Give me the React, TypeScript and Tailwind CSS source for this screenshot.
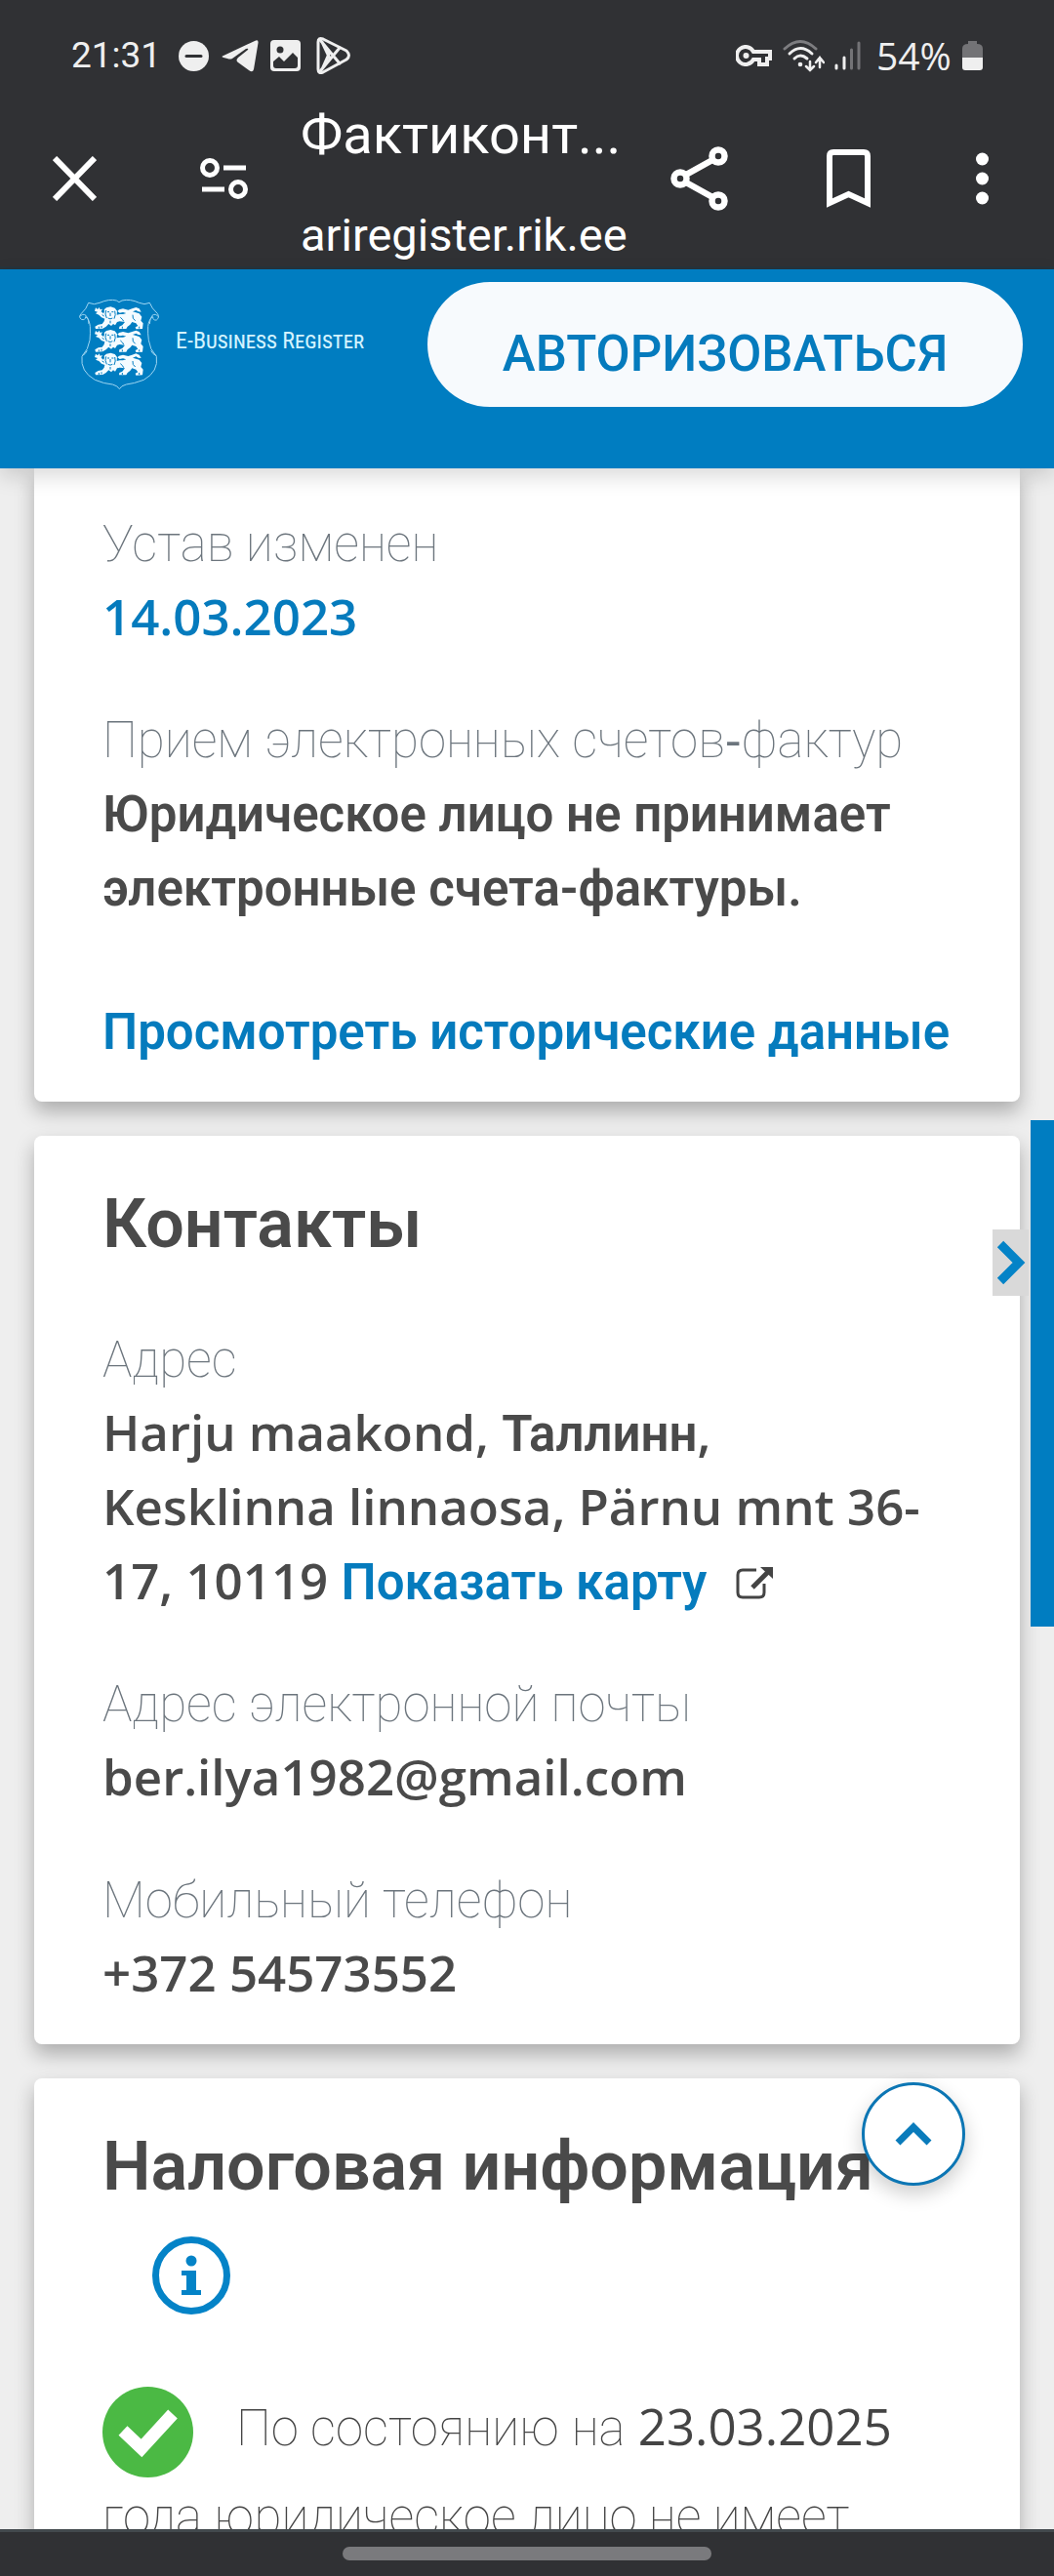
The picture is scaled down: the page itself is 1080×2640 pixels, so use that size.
import React from 'react';

const LION =
  'M66 40 L72 45 L77 39 L80 46 L87 44 L83 52 L90 58 L93 52 L92 46 L99 40 L112 37 L125 41 L132 50 L131 62 L140 60 L150 60 L160 57 L150 54 L140 56 L133 51 L138 46 L150 43 L166 47 L178 43 L190 39 L200 43 L206 53 L197 52 L190 48 L180 52 L200 58 L208 68 L205 80 L212 88 L210 105 L190 106 L188 100 L196 96 L190 88 L178 84 L172 92 L164 98 L160 105 L138 105 L139 98 L148 94 L156 84 L140 82 L132 84 L126 94 L120 90 L114 96 L106 90 L98 98 L88 104 L66 105 L64 98 L74 92 L86 90 L92 82 L94 74 L84 70 L76 62 L66 58 L72 53 L63 50 Z';

function Crest() {
  return (
    <svg viewBox="0 0 276 300" className="h-[100px] w-[92px] shrink-0" aria-hidden="true">
      <path
        d="M44 25 Q62 33 78 25 Q108 12 130 18 L138 23 L147 18 Q172 12 200 25 Q216 33 232 25 Q238 42 256 58 Q264 70 253 78 Q242 80 242 68 Q229 76 227 98 Q226 120 229 140 Q232 168 253 190 Q260 236 214 262 Q182 274 160 276 Q144 280 139 290 Q134 280 118 276 Q92 274 64 262 Q18 236 24 190 Q44 168 48 140 Q50 120 49 98 Q47 76 35 68 Q34 80 22 76 Q12 68 22 58 Q38 44 44 25 Z"
        fill="none"
        stroke="#9fd6f2"
        strokeWidth="3"
      />
      <path d="M17 68 Q26 56 36 64 Q46 74 45 90 M259 68 Q250 56 240 64 Q232 74 232 90 M24 188 Q34 184 40 172 M253 188 Q242 184 236 172" fill="none" stroke="#9fd6f2" strokeWidth="3" />
      {[0, 71, 142].map((dy) => (
        <g key={dy} transform={`translate(0 ${dy})`}>
          <path d={LION} fill="#f4fbff" />
          <path d="M102 53 h6 M115 53 h6 M111 56 v10 M104 72 q7 5 14 0 M98 48 q-5 12 2 24 M125 50 q4 12 -2 24 M111 80 v8 M92 66 l-6 -4 M142 70 q8 6 10 12 M180 62 q-2 12 8 18 M76 98 v6 M84 96 v6 M148 98 v6 M200 98 v6" fill="none" stroke="#007dc1" strokeWidth="3" />
        </g>
      ))}
    </svg>
  );
}

function StatusBar() {
  return (
    <div className="flex h-[92px] items-center pt-[22px] pr-[73px] pl-[73px] text-[#efefef]">
      <span className="mr-[20px] w-[90px] font-['Roboto'] text-[37px] leading-[50px]">21:31</span>
      {/* Do not disturb */}
      <svg viewBox="0 0 31 31" className="mr-[13px] h-[31px] w-[31px]">
        <circle cx="15.500" cy="15.500" r="15.500" fill="#efefef" />
        <path d="M8 15.500 H23" stroke="#303134" strokeWidth="3" strokeLinecap="round" />
      </svg>
      {/* Telegram */}
      <svg viewBox="0 0 38 34" className="mr-[12px] h-[34px] w-[38px]" fill="#efefef">
        <path d="M2 17 L34 2 Q38 0 37.500 4 L33 31 Q32 35 28 32 L17 24 Q14 22 17 19 L27 11 Q28 9 25 10 L11 20 Q9 21 6 20 L2 19 Q-1 18 2 17 Z" />
      </svg>
      {/* Gallery */}
      <svg viewBox="0 0 31 32" className="mr-[16px] h-[32px] w-[31px]">
        <rect width="31" height="32" rx="4" fill="#efefef" />
        <circle cx="10" cy="10" r="3.500" fill="#303134" />
        <path d="M3 22 L9 17 L14 22 L23 13 L28 18 V26 Q28 29 25 29 H6 Q3 29 3 26 Z" fill="#303134" />
      </svg>
      {/* Play */}
      <svg viewBox="0 0 36 40" className="h-[40px] w-[36px]" fill="none" stroke="#efefef" strokeWidth="3" strokeLinejoin="round" strokeLinecap="round">
        <path d="M2 6 Q2 1 7 3 L31 15 Q36 20 31 24 L7 37 Q2 39 2 34 Z" />
        <path d="M4 4 L24 28 M4 36 L24 12 M14 16 L6 34 M14 23 L6 6" />
      </svg>
      <div className="flex-1" />
      {/* VPN key */}
      <svg viewBox="0 0 37 22" className="mr-[11px] h-[22px] w-[37px]" fill="none" stroke="#efefef" strokeWidth="4">
        <path d="M18 7 A9 9 0 1 0 18 15 H24 V20 H32 V14 H35 V7 Z" strokeLinejoin="miter" />
        <circle cx="10.500" cy="11" r="3" fill="#efefef" stroke="none" />
      </svg>
      {/* Wi-Fi */}
      <svg viewBox="0 0 43 35" className="mr-[10px] h-[35px] w-[43px]" fill="none" stroke="#efefef" strokeWidth="3" strokeLinecap="round">
        <path d="M2 10 Q18 -5 34 10" stroke="#7d7d80" />
        <path d="M7 15 Q18 4 30 15 M12 20 Q18 14 25 20" />
        <circle cx="18" cy="26" r="2.300" fill="#efefef" stroke="none" />
        <path d="M28 23 V32 M24 28 L28 32 L32 28 M38 29 V19 M34 24 L38 19 L42 24" strokeWidth="2.500" />
      </svg>
      {/* Signal */}
      <svg viewBox="0 0 27 30" className="mr-[16px] h-[30px] w-[27px]" strokeWidth="3" strokeLinecap="round">
        <path d="M2 25 V28 M10 17 V28" stroke="#efefef" />
        <path d="M17.500 9 V28 M25 2 V28" stroke="#737376" />
      </svg>
      <span className="w-[88px] font-['Open_Sans'] text-[39px] leading-[50px]">54%</span>
      <svg viewBox="0 0 21 30" className="h-[30px] w-[21px]">
        <path d="M6 0 H15 V3 Q21 3 21 8 V17 H0 V8 Q0 3 6 3 Z" fill="#737376" />
        <path d="M0 17 H21 V27 Q21 30 18 30 H3 Q0 30 0 27 Z" fill="#efefef" />
      </svg>
    </div>
  );
}

function BrowserBar() {
  return (
    <div className="flex h-[184px] items-center border-b-[3px] border-[#26343c] pr-[67px] pl-[54px] text-white">
      <button aria-label="Закрыть" className="mr-[106px]">
        <svg viewBox="0 0 45 46" className="block h-[46px] w-[45px]" stroke="currentColor" strokeWidth="6">
          <path d="M2 2 L43 44 M43 2 L2 44" />
        </svg>
      </button>
      <button aria-label="Сведения о сайте" className="mr-[54px]">
        <svg viewBox="0 0 49 42" className="block h-[42px] w-[49px]" fill="none" stroke="currentColor" strokeWidth="5">
          <circle cx="10" cy="10" r="7.500" />
          <circle cx="39" cy="32" r="7.500" />
          <path d="M24 10 H47 M2 32 H25" />
        </svg>
      </button>
      <div className="min-w-0 flex-1 self-start font-['Roboto'] whitespace-nowrap">
        <div className="text-[56px] leading-[92px]">Фактиконт...</div>
        <div className="pt-[22px] text-[47px] leading-[70px]">ariregister.rik.ee</div>
      </div>
      <button aria-label="Поделиться" className="mr-[101px] ml-[48px]">
        <svg viewBox="0 0 59 66" className="block h-[66px] w-[59px]" fill="none" stroke="currentColor" strokeWidth="6.500">
          <circle cx="49" cy="10" r="6.500" />
          <circle cx="10" cy="33" r="6.500" />
          <circle cx="49" cy="56" r="6.500" />
          <path d="M16 29 L43 14 M16 37 L43 52" />
        </svg>
      </button>
      <button aria-label="Закладка" className="mr-[108px]">
        <svg viewBox="0 0 45 60" className="block h-[60px] w-[45px]" fill="none" stroke="currentColor" strokeWidth="6">
          <path d="M3 55 V7 Q3 3 7 3 H38 Q42 3 42 7 V55 L22.500 46 Z" />
        </svg>
      </button>
      <button aria-label="Меню">
        <svg viewBox="0 0 13 54" className="block h-[54px] w-[13px]" fill="currentColor">
          <circle cx="6.500" cy="7" r="6.500" />
          <circle cx="6.500" cy="27" r="6.500" />
          <circle cx="6.500" cy="47" r="6.500" />
        </svg>
      </button>
    </div>
  );
}

function SiteHeader() {
  return (
    <header className="relative z-10 flex h-[204px] items-start bg-[#007dc1] pr-[32px] pl-[76px] shadow-[0_8px_20px_rgba(0,0,0,0.15)]">
      <a href="#" className="mt-[26px] flex items-center">
        <Crest />
        <span className="mb-[6px] ml-[12px] whitespace-nowrap font-['Roboto_Condensed','Liberation_Sans_Narrow','Roboto'] text-[24px] [font-variant:small-caps] text-[#d3f3ff]">
          E-Business Register
        </span>
      </a>
      <button className="mt-[13px] ml-auto h-[128px] w-[610px] rounded-full bg-[#f7fafd] pt-[20px] font-['Roboto'] text-[51px] font-medium text-[#057bbd]">
        АВТОРИЗОВАТЬСЯ
      </button>
    </header>
  );
}

// Open Sans covers the Latin glyphs, Roboto the Cyrillic ones
function Ru({ children }: { children: React.ReactNode }) {
  return <span className="font-['Roboto'] leading-none">{children}</span>;
}

function Label({ children }: { children: React.ReactNode }) {
  return <dt className="font-thin text-[#6c757d]"><Ru>{children}</Ru></dt>;
}

function Field({ label, children }: { label: React.ReactNode; children: React.ReactNode }) {
  return (
    <div>
      <Label>{label}</Label>
      <dd className="font-semibold text-[#4a4a4a]">{children}</dd>
    </div>
  );
}

function Card({ children, className }: { children: React.ReactNode; className: string }) {
  return (
    <section className={`rounded-[8px] bg-white px-[70px] pb-[36px] shadow-[0_10px_20px_rgba(0,0,0,0.28)] ${className}`}>
      {children}
    </section>
  );
}

export default function App() {
  return (
    <div className="flex h-screen flex-col overflow-hidden bg-[#eeeeee]">
      <div className="shrink-0 bg-[#303134]">
        <StatusBar />
        <BrowserBar />
      </div>

      <div className="shrink-0">
        <SiteHeader />
      </div>

      <main className="relative min-h-0 flex-1 overflow-hidden px-[35px] font-['Open_Sans'] text-[51px] leading-[76px]">
        <Card className="rounded-t-none pt-[37px]">
          <dl className="flex flex-col gap-[49px]">
            <Field label="Устав изменен">
              <a href="#" className="text-[#057bbd]">14.03.2023</a>
            </Field>
            <Field label={<>Прием электронных счетов<span className="font-['Open_Sans'] font-normal">-</span>фактур</>}>
              <Ru>Юридическое лицо не принимает электронные счета-фактуры.</Ru>
            </Field>
          </dl>
          <a href="#" className="mt-[71px] block font-semibold whitespace-nowrap text-[#057bbd]">
            <Ru>Просмотреть исторические данные</Ru>
          </a>
        </Card>

        <Card className="mt-[35px] pt-[48px]">
          <h2 className="mb-[57px] font-['Roboto'] text-[70px] leading-[84px] font-semibold text-[#4a4a4a]">Контакты</h2>
          <dl className="flex flex-col gap-[49px]">
            <Field label="Адрес">
              Harju maakond, <Ru>Таллинн</Ru>, Kesklinna linnaosa, Pärnu mnt 36-17, 10119{' '}
              <a href="#" className="text-[#057bbd]">
                <Ru>Показать карту</Ru>
                <svg viewBox="0 0 39 34" className="ml-[30px] inline h-[34px] w-[39px] align-baseline" fill="none" stroke="#444" strokeWidth="3">
                  <path d="M21 4 H7 Q2 4 2 9 V27 Q2 32 7 32 H24 Q29 32 29 27 V18" />
                  <path d="M17 22 L33 6" strokeWidth="5" />
                  <path d="M25 1 H38 V13 Z" fill="#444" stroke="none" />
                </svg>
              </a>
            </Field>
            <Field label="Адрес электронной почты">ber.ilya1982@gmail.com</Field>
            <Field label="Мобильный телефон">+372 54573552</Field>
          </dl>
        </Card>

        <Card className="mt-[35px] pt-[48px]">
          <div className="flex flex-wrap gap-y-[30px]">
            <h2 className="font-['Roboto'] text-[70px] leading-[84px] font-semibold whitespace-nowrap text-[#4a4a4a]">Налоговая информация</h2>
            <button aria-label="Информация" className="ml-[51px]">
              <svg viewBox="0 0 80 80" className="block h-[80px] w-[80px]">
                <circle cx="40" cy="40" r="36.500" fill="none" stroke="#0483c7" strokeWidth="7" />
                <circle cx="40" cy="25" r="5.500" fill="#0483c7" />
                <path d="M30 35 H45 V55 H50 V60 H30 V55 H35 V40 H30 Z" fill="#0483c7" />
              </svg>
            </button>
          </div>
          <p className="mt-[74px] font-thin text-[#444]">
            <svg viewBox="0 0 93 93" className="mr-[44px] inline h-[93px] w-[93px] align-middle">
              <circle cx="46.500" cy="46.500" r="46.500" fill="#4bb944" />
              <path d="M21 45 L40 63 L72 28" fill="none" stroke="#fff" strokeWidth="13" strokeLinejoin="miter" />
            </svg>
            <Ru>По состоянию на</Ru> <span className="font-medium">23.03.2025</span> <Ru>года юридическое лицо не имеет</Ru>
          </p>
        </Card>

        {/* Side menu toggle */}
        <div className="absolute top-[668px] right-0 flex h-[519px] items-start">
          <button aria-label="Открыть меню" className="mt-[112px] mr-[2px] flex h-[68px] w-[37px] items-center justify-center bg-[#d9d9d9]">
            <svg viewBox="0 0 30 46" className="h-[46px] w-[30px]" fill="none" stroke="#0483c7" strokeWidth="9">
              <path d="M4 4 L23 23 L4 42" />
            </svg>
          </button>
          <div className="h-full w-[24px] bg-[#007dc1]" />
        </div>

        {/* Back to top */}
        <button aria-label="Наверх" className="absolute right-[91px] bottom-[352px] flex h-[106px] w-[106px] items-center justify-center rounded-full border-[3px] border-[#0c76b4] bg-white shadow-[0_8px_20px_rgba(0,0,0,0.2)]">
          <svg viewBox="0 0 38 24" className="h-[24px] w-[38px]" fill="none" stroke="#0a7bbb" strokeWidth="7">
            <path d="M3 21 L19 5 L35 21" />
          </svg>
        </button>
      </main>

      <nav className="flex h-[48px] shrink-0 justify-center border-t-[3px] border-[#42494d] bg-[#303134] pt-[15px]">
        <div className="h-[14px] w-[35%] rounded-full bg-[#7a7a7d]" />
      </nav>
    </div>
  );
}
